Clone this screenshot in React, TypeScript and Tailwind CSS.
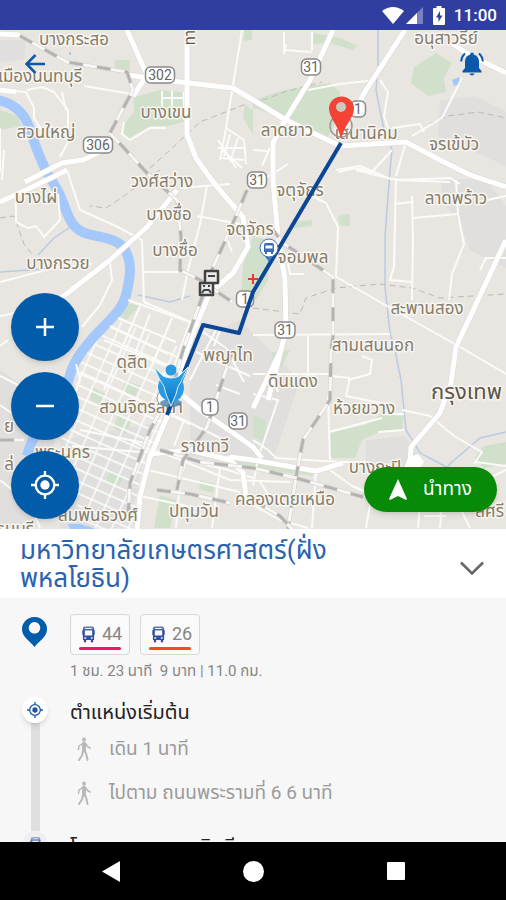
import type { ReactNode } from "react";

type Label = {
  text: string;
  x: number;
  y: number;
  anchor?: "start" | "middle" | "end";
};

const labels: Label[] = [
  { text: "บางกระสอ", x: 74, y: 45 },
  { text: "เมืองนนทบุรี", x: 82, y: 82, anchor: "end" },
  { text: "บางเขน", x: 166, y: 118 },
  { text: "สวนใหญ่", x: 46, y: 138 },
  { text: "วงศ์สว่าง", x: 162, y: 187 },
  { text: "บางไผ่", x: 36, y: 203 },
  { text: "บางซื่อ", x: 169, y: 220 },
  { text: "จตุจักร", x: 250, y: 235 },
  { text: "บางซื่อ", x: 175, y: 256 },
  { text: "บางกรวย", x: 58, y: 269 },
  { text: "ดุสิต", x: 132, y: 368 },
  { text: "สวนจิตรลดา", x: 141, y: 413 },
  { text: "พญาไท", x: 228, y: 361 },
  { text: "ราชเทวี", x: 205, y: 452 },
  { text: "พระนคร", x: 90, y: 458, anchor: "end" },
  { text: "สัมพันธวงศ์", x: 98, y: 521 },
  { text: "ปทุมวัน", x: 194, y: 517 },
  { text: "อนุสาวรีย์", x: 446, y: 44 },
  { text: "ลาดยาว", x: 287, y: 136 },
  { text: "เสนานิคม", x: 366, y: 139 },
  { text: "จรเข้บัว", x: 454, y: 150 },
  { text: "จตุจักร", x: 300, y: 196 },
  { text: "ลาดพร้าว", x: 456, y: 204 },
  { text: "จอมพล", x: 303, y: 263 },
  { text: "สะพานสอง", x: 427, y: 314 },
  { text: "สามเสนนอก", x: 373, y: 351 },
  { text: "ดินแดง", x: 293, y: 387 },
  { text: "ห้วยขวาง", x: 364, y: 414 },
  { text: "บางกะปิ", x: 375, y: 473 },
  { text: "คลองเตยเหนือ", x: 285, y: 505 },
  { text: "ลศรี", x: 504, y: 517, anchor: "end" },
  { text: "ย", x: 14, y: 432, anchor: "end" },
  { text: "ล่", x: 14, y: 470, anchor: "end" },
  { text: "ธนบุรี", x: 34, y: 535, anchor: "end" },
];

const shields = [
  { text: "302", x: 160, y: 75, w: 29 },
  { text: "306", x: 98, y: 145, w: 29 },
  { text: "31", x: 311, y: 67, w: 19 },
  { text: "1", x: 358, y: 109, w: 15 },
  { text: "31", x: 257, y: 180, w: 19 },
  { text: "1", x: 245, y: 299, w: 17 },
  { text: "31", x: 285, y: 330, w: 20 },
  { text: "1", x: 210, y: 407, w: 16 },
  { text: "31", x: 238, y: 421, w: 18 },
];

const parks = [
  "M134 97 160 90 182 92 184 122 168 126 150 126 128 139 121 128 134 112Z",
  "M115 60 130 60 130 70 115 68Z",
  "M253 100 284 90 330 83 340 92 336 122 326 140 288 119 253 108Z",
  "M414 67 436 53 452 63 444 78 446 92 428 96 411 83Z",
  "M253 236 268 240 268 280 256 300 241 290 243 265Z",
  "M0 110 17 116 22 126 0 130Z",
  "M338 216 350 214 350 226 340 226Z",
  "M292 222 312 220 312 226 294 228Z",
  "M329 433 365 425 382 414 404 416 402 430 378 433 362 440 355 458 331 458Z",
  "M475 458 484 446 506 442 506 464 484 468Z",
  "M121 302 140 306 126 320 118 314Z",
  "M253 415 266 420 264 442 253 436Z",
  "M160 495 176 500 170 528 154 528Z",
  "M230 459 316 470 312 476 230 465Z",
  "M272 352 290 350 282 366 274 370Z",
  "M126 380 140 386 134 398 121 392Z",
  "M93 388 106 394 101 405 90 400Z",
  "M118 415 132 420 126 434 113 428Z",
  "M110 470 124 476 118 488 106 482Z",
  "M245 30 252 30 252 40 243 41Z",
  "M245 105 253 110 253 134 243 118Z",
  "M314 33 340 38 358 46 352 50 330 43 312 44Z",
  "M200 480 215 484 213 493 199 489Z",
];

const urban = [
  "M440 100 476 96 506 112 506 166 470 150 438 136Z",
  "M440 180 486 178 506 206 506 268 470 250 458 220 444 204Z",
  "M0 370 30 390 60 420 50 460 30 528 0 528Z",
  "M60 440 150 424 130 528 60 528Z",
  "M366 440 404 436 420 456 400 474 366 464Z",
  "M190 340 240 320 300 380 270 470 190 456Z",
  "M0 40 26 40 24 60 0 62Z",
];

const minorRoads = [
  "M0 90 26 92 34 108 34 118 44 134",
  "M27 90 42 87 54 92 68 110 68 142 60 157",
  "M84 86 132 94 M0 128 0 172 M4 150 2 180 M66 110 62 92",
  "M162 91 162 106 M172 91 172 106 M162 98 184 98 M184 92 184 120",
  "M124 122 122 134 130 140 150 128 166 128",
  "M242 30 226 128 220 160 M226 128 244 140 246 164 M222 150 242 168",
  "M218 140 236 168 M230 134 224 156 M238 138 230 162 M218 148 246 148 M220 158 244 160",
  "M67 170 80 210 116 226 142 240 144 302 M142 272 178 272",
  "M16 202 16 222 28 228 36 226 44 237 60 220 58 194",
  "M0 282 54 268 92 264 M110 262 112 280 100 305 82 327",
  "M180 188 230 184 M207 186 200 224 188 270 182 300",
  "M197 216 240 224 M226 236 232 252 M144 302 200 326",
  "M128 300 190 322 M140 306 104 390 M118 318 176 342 M110 326 168 354 M150 314 128 372",
  "M172 318 152 366 M190 322 172 372 M104 340 166 366",
  "M284 32 284 50 312 52 M312 32 312 50 M286 44 284 54",
  "M308 90 340 84 376 80 M380 80 388 92 384 116 392 140 M406 142 396 176",
  "M462 78 442 118 412 136 M392 128 420 124 424 132",
  "M253 150 268 151 M262 166 270 148 M336 170 360 166 388 178",
  "M288 164 253 186 M394 180 450 178 460 184 M356 170 396 180 450 182",
  "M396 178 394 266 390 280 412 282 M412 196 413 240 412 300 M394 204 412 202",
  "M412 218 458 214 M456 180 458 214 464 244 452 274 449 300 M480 270 486 258 506 258",
  "M300 190 326 203 338 227 336 277 M288 263 290 274 304 274",
  "M333 275 380 302 460 347 M460 347 506 374 M478 202 506 196",
  "M253 335 390 334 M308 334 308 376 M253 374 330 374 M272 376 278 392 M331 376 350 378 M348 380 370 374 372 360 362 356",
  "M350 378 346 396 386 404 384 414 404 414 M402 410 430 416 454 436 482 452 474 464",
  "M328 396 330 460 M329 432 382 418 M378 432 404 430 M253 394 278 400 258 458",
  "M253 440 268 450 276 458 340 462 366 462 M258 458 253 486 M330 470 352 486 372 494 366 528",
  "M184 420 220 438 M160 410 184 420 174 446 M130 440 154 452 228 470 253 478",
  "M156 450 230 480 290 482 M148 470 240 492 M192 440 180 480 176 528 M220 468 212 528",
  "M140 496 196 508 M260 482 272 500 M253 505 280 520 308 528 M316 470 312 528",
  "M404 500 428 512 M420 504 418 528 M442 500 440 528 M424 516 446 516 M460 508 470 528",
  "M200 330 226 348 244 382 M220 330 214 346 M196 352 250 376 M216 385 240 394 M190 380 216 330",
  "M0 376 24 388 40 410 M0 405 30 426 M0 480 30 504 40 528 M8 340 0 346 M0 316 20 312",
  "M76 364 80 380 66 420 M80 372 190 424 M80 430 150 444 M72 446 140 452",
  "M392 150 372 172 356 168 338 172 M444 500 506 470 M476 462 506 466",
];

const majorRoads = [
  "M127 75 180 82 233 88 253 100 286 120 340 146 406 142 440 160 470 175 506 187",
  "M187 30 187 135 196 158 213 182 243 217 248 247 233 273 210 293 197 323 187 350 167 417 150 457 140 497 137 529",
  "M333 30 310 80 284 122 273 143 273 180 278 237 285 280 286 330 281 350 253 408",
  "M405 30 366 90 345 128",
  "M450 42 466 53 506 73",
  "M506 240 456 347 451 383 440 413 411 447 410 463",
  "M0 202 26 190 53 177 67 170 M25 182 62 163 83 160 110 147",
  "M0 90 16 92",
  "M127 30 147 75 133 96",
  "M56 302 110 260 147 227 177 190",
  "M180 393 200 410 233 433 253 447 262 458",
  "M150 454 190 450 230 460",
  "M230 457 253 460 316 471 343 463",
  "M227 457 243 473 247 503",
  "M0 34 20 35",
  "M281 350 268 400",
];

const rails = [
  "M20 36 67 62 127 72 133 90 110 133 147 173 177 200 181 237 180 270 200 280 232 302",
  "M247 190 227 237 213 267 200 303 183 350 172 390 150 430 130 483 128 518",
  "M270 226 283 243 333 277 333 337 331 350 330 400 303 440 296 477 288 529",
  "M160 450 200 462 253 468 296 478 363 497",
  "M157 490 190 494 230 503",
  "M232 352 218 394 207 427 183 460 177 490",
  "M253 500 280 516 292 529",
  "M0 440 24 440",
];

const streams = [
  "M378 30 378 66 376 90 384 130 392 150 390 170 385 237 385 287 390 333 395 350 401 380 406 430 420 453 452 470",
  "M38 255 54 238 72 226",
  "M0 272 30 270 90 266",
  "M138 295 170 302 190 296",
  "M424 492 452 462 480 438 506 432",
];

const boundaries = [
  "M150 168 170 150 200 122 246 104",
  "M253 104 284 92 322 82",
  "M160 170 140 184 124 196 106 208 90 206",
  "M0 218 14 216 24 244 32 254",
  "M253 308 300 314 306 298 336 288 380 284 412 288 440 298 506 294",
  "M430 124 448 116 478 112 506 118",
];

function Fab({ label, children }: { label: string; children: ReactNode }) {
  return (
    <button
      type="button"
      aria-label={label}
      className="flex size-[68px] items-center justify-center rounded-full bg-[#035caa] text-white shadow-md"
    >
      {children}
    </button>
  );
}

function LocateIcon({ className }: { className: string }) {
  return (
    <svg viewBox="0 0 24 24" className={className} fill="none" stroke="currentColor">
      <circle cx="12" cy="12" r="8" strokeWidth="2" />
      <circle cx="12" cy="12" r="4" fill="currentColor" stroke="none" />
      <path d="M12 0v4M12 20v4M0 12h4M20 12h4" strokeWidth="2" />
    </svg>
  );
}

function BusIcon({ className }: { className: string }) {
  return (
    <svg viewBox="0 0 14 17" className={className} fill="currentColor">
      <path d="M3 0h8q2 0 2 2v2H1V2q0-2 2-2Z" opacity=".75" />
      <path d="M3.500 1.500h7v1h-7Z" fill="#fff" />
      <path
        fillRule="evenodd"
        d="M1 3h12v11.500h-1V16q0 1-1.200 1T9.500 16v-1.500h-5V16q0 1-1.300 1T2 16v-1.500H1ZM3 4v5.500h8V4ZM2.500 11.500v1.500h2v-1.500Zm7 0v1.500h2v-1.500Z"
      />
      <path d="M0 4h1v5H0ZM13 4h1v5h-1Z" opacity=".7" />
    </svg>
  );
}

function WalkIcon() {
  return (
    <svg
      viewBox="0 0 14 24"
      className="h-6 w-[14px] shrink-0 text-[#b9b9b9]"
      fill="none"
      stroke="currentColor"
      strokeLinecap="round"
      strokeLinejoin="round"
    >
      <circle cx="7" cy="2.500" r="2" fill="currentColor" stroke="none" />
      <path d="M7 6.500V13.500" strokeWidth="4" />
      <path d="M5.500 6.500 2 9 1.500 12.500M8.500 6.500 10.500 9.500 13 11" strokeWidth="1.500" />
      <path d="M6 14 5 18.500 2 23M8 14 9.500 18 10.500 23" strokeWidth="2" />
    </svg>
  );
}

function StatusBar() {
  return (
    <header className="flex h-[30px] shrink-0 items-center justify-end bg-[#303f9f] pr-[9px] text-white">
      <svg viewBox="0 0 22 17" className="h-[17px] w-[22px]" fill="currentColor">
        <path d="M11 17 0 4Q11-4 22 4Z" />
      </svg>
      <svg viewBox="0 0 17 17" className="ml-[2px] h-[17px] w-[17px]" fill="currentColor">
        <path d="M0 17 17 0V17Z" opacity=".35" />
        <path d="M0 17 11 6V17Z" />
      </svg>
      <svg viewBox="0 0 12 19" className="ml-[10px] h-[19px] w-3">
        <path d="M3.500 0h5v2H11q1 0 1 1v15q0 1-1 1H1q-1 0-1-1V3Q0 2 1 2h2.500Z" fill="currentColor" />
        <path d="M7 5 3 11.500h2.500V16L9.500 9.500H7Z" fill="#303f9f" />
      </svg>
      <time className="ml-[9px] text-[17px] leading-none font-medium">11:00</time>
    </header>
  );
}

function MapCanvas() {
  return (
    <svg
      viewBox="0 30 506 499"
      preserveAspectRatio="xMidYMid slice"
      className="absolute inset-0 h-full w-full"
      role="img"
      aria-label="แผนที่"
    >
      <defs>
        <pattern id="blocks" width="15" height="11" patternUnits="userSpaceOnUse" patternTransform="rotate(24)">
          <path d="M0 1H15M2 0V11" stroke="#fff" strokeWidth="1.300" fill="none" />
        </pattern>
        <linearGradient id="person" x1="0" x2="0" y1="0" y2="1">
          <stop offset="0" stopColor="#35aef0" />
          <stop offset="1" stopColor="#0b73c4" />
        </linearGradient>
      </defs>
      <rect y="30" width="506" height="499" fill="#e9e6e1" />
      <g fill="#e0dfde">
        {urban.map((d) => (
          <path key={d} d={d} />
        ))}
      </g>
      <g fill="#d0e0cb">
        {parks.map((d) => (
          <path key={d} d={d} />
        ))}
      </g>
      <path d="M82 345 118 320 190 352 170 420 150 456 136 529 84 529 60 440 74 400Z" fill="url(#blocks)" />
      <g fill="none" stroke="#b9cbe4" strokeWidth="1.500">
        {streams.map((d) => (
          <path key={d} d={d} />
        ))}
      </g>
      <path
        d="M-4 100C12 102 24 112 29 127S40 160 48 174 58 188 64 205 74 230 88 234 118 238 125 250 131 275 126 295 102 324 83 350 74 378 60 398 34 430 27 456"
        fill="none"
        stroke="#a5c8fa"
        strokeWidth="10"
      />
      <path d="M68 524 80 524 96 529 70 529Z" fill="#a5c8fa" />
      <path d="M452 80 459 77 461 84 454 86ZM69 52 71 52 71 55 69 55Z" fill="#a5c8fa" />
      <g fill="none" stroke="#bdbab5" strokeWidth="1" strokeDasharray="6 4">
        {boundaries.map((d) => (
          <path key={d} d={d} />
        ))}
      </g>
      <g fill="none" stroke="#fbfbfa" strokeWidth="2" strokeLinejoin="round">
        {minorRoads.map((d) => (
          <path key={d} d={d} />
        ))}
      </g>
      <g fill="none" strokeLinejoin="round">
        {majorRoads.map((d) => (
          <path key={d} d={d} stroke="#dcdad6" strokeWidth="6" />
        ))}
        {majorRoads.map((d) => (
          <path key={d} d={d} stroke="#fff" strokeWidth="5" />
        ))}
      </g>
      <path d="M408 458 418 454 424 462 420 468 404 468Z" fill="#fff" />
      <g fill="none">
        {rails.map((d) => (
          <g key={d}>
            <path d={d} stroke="#d0cecb" strokeWidth="4" />
            <path d={d} stroke="#f8f7f5" strokeWidth="3" />
            <path d={d} stroke="#b5b3b1" strokeWidth="3" strokeDasharray="14 14" />
          </g>
        ))}
      </g>

      <g
        fontSize="17"
        fill="#857c69"
        stroke="#f8f6f2"
        strokeWidth="3"
        strokeLinejoin="round"
        paintOrder="stroke"
      >
        {labels.map((l) => (
          <text key={`${l.text}${l.x}`} x={l.x} y={l.y} textAnchor={l.anchor ?? "middle"}>
            {l.text}
          </text>
        ))}
        <text x="431" y="399" fontSize="22" fill="#5c554a">
          กรุงเทพ
        </text>
        <text fontSize="15" fill="#5c554a" textAnchor="end" transform="translate(195 30) rotate(-90)">
          ทา
        </text>
      </g>

      <g fontSize="14" textAnchor="middle" fill="#666">
        {shields.map((s) => (
          <g key={`${s.text}${s.x}`}>
            <rect
              x={s.x - s.w / 2}
              y={s.y - 8}
              width={s.w}
              height="16"
              rx="5"
              fill="#fff"
              stroke="#8b8b8b"
              strokeWidth="1.500"
            />
            <text x={s.x} y={s.y + 5}>
              {s.text}
            </text>
          </g>
        ))}
      </g>

      <g fill="#e9e9e9" stroke="#424242" strokeWidth="2.500" strokeLinejoin="round">
        <path d="M205 271h13v12h-13ZM200 283h13v12h-13Z" />
        <path d="M208 276h7M202 293l2-3h5l2 3M203 286h2M208 286h2" fill="none" strokeWidth="2" />
      </g>
      <path d="M253 274v10M248 279h10" stroke="#ee3434" strokeWidth="2" />

      <circle cx="165" cy="398" r="8" fill="#fff" stroke="#999" strokeWidth="1" />
      <path
        d="M341 143 253 292 239 333 203 325 167 415"
        fill="none"
        stroke="#0c4796"
        strokeWidth="4"
        strokeLinejoin="round"
      />

      <path d="M269 262 264 255h10Z" fill="#4377b8" />
      <circle cx="269" cy="248" r="9" fill="#fff" stroke="#4377b8" strokeWidth="1" />
      <g fill="#3a6cba">
        <path fillRule="evenodd" d="M266 243h6q2 0 2 2v7h-10v-7q0-2 2-2Zm-.5 2.500v3h7v-3Z" />
        <path d="M265 252h2v2h-2ZM271 252h2v2h-2Z" />
      </g>

      <circle cx="341" cy="126" r="11" fill="none" stroke="#9b9b9b" strokeWidth="1.500" />
      <path d="M341 139C338 124 329 118 329 108.500a12.500 12 0 0 1 25 0C354 118 345 124 341 139Z" fill="#f44336" />
      <circle cx="341" cy="107" r="5" fill="#c9c9c0" />

      <ellipse cx="171" cy="403" rx="11" ry="4" fill="#4a7fae" opacity=".8" />
      <path d="M158 388Q158 381 162 378H180Q184 382 184 389 183 399 172 403 159 399 158 388Z" fill="#2b9ae3" />
      <path
        d="M154 367 163 376Q171 380 179 376L188 367 182 380Q177 386 176 394L171 406 166 394Q165 386 160 380Z"
        fill="url(#person)"
        stroke="#d5eefc"
        strokeWidth="1"
        strokeLinejoin="round"
      />
      <circle cx="171" cy="370" r="5.500" fill="#2a9be2" />
    </svg>
  );
}

function MapView() {
  return (
    <section className="relative min-h-0 flex-1 overflow-hidden">
      <MapCanvas />
      <button type="button" aria-label="กลับ" className="absolute top-6 left-[25px] text-[#0b59a8]">
        <svg viewBox="0 0 20 20" className="size-5" fill="none" stroke="currentColor" strokeWidth="2.500">
          <path d="M20 10H2M10.500 1 1.500 10l9 9" />
        </svg>
      </button>
      <button
        type="button"
        aria-label="แจ้งเตือน"
        className="absolute top-[22px] right-[22px] text-[#0b59a8]"
      >
        <svg viewBox="0 0 24 24" className="size-6" fill="currentColor">
          <path d="M12 .5q1.800 0 1.800 2c3.200.8 5.200 3.500 5.200 7V16l2.500 3v1.500h-19V19L5 16V9.500c0-3.500 2-6.200 5.200-7q0-2 1.800-2ZM9.500 21.500h5q-.5 2-2.500 2t-2.500-2Z" />
          <path
            d="M5 1.500Q1.500 4.500 1.200 9.500M19 1.500q3.500 3 3.800 8"
            fill="none"
            stroke="currentColor"
            strokeWidth="2"
          />
        </svg>
      </button>
      <div className="absolute bottom-[10px] left-[11px] flex flex-col gap-[11px]">
        <Fab label="ขยาย">
          <svg viewBox="0 0 18 18" className="size-[18px]" stroke="currentColor" strokeWidth="2.500">
            <path d="M9 0v18M0 9h18" />
          </svg>
        </Fab>
        <Fab label="ย่อ">
          <svg viewBox="0 0 18 18" className="size-[18px]" stroke="currentColor" strokeWidth="2.500">
            <path d="M0 9h18" />
          </svg>
        </Fab>
        <Fab label="ตำแหน่งของฉัน">
          <LocateIcon className="size-7" />
        </Fab>
      </div>
      <button
        type="button"
        className="absolute right-[9px] bottom-[17px] flex h-[45px] w-[133px] items-center justify-center gap-4 rounded-full bg-[#078a07] text-[19px] text-white shadow-md"
      >
        <svg viewBox="0 0 18 21" className="h-[21px] w-[18px]" fill="currentColor">
          <path d="M9 0 18 20l-1 1-8-4-8 4-1-1Z" />
        </svg>
        นำทาง
      </button>
    </section>
  );
}

function BusChip({ line, barClass }: { line: string; barClass: string }) {
  return (
    <div className="w-[60px] rounded-[4px] border border-[#d8d8d8] bg-[#fafafa] px-2 pt-[8px] pb-1">
      <div className="flex items-center gap-[7px] pl-[3px]">
        <BusIcon className="h-[17px] w-[13px] shrink-0 text-[#2c4ea3]" />
        <span className="text-lg leading-[22px] text-[#858585]">{line}</span>
      </div>
      <div className={`mt-[2px] h-[3px] rounded-full ${barClass}`} />
    </div>
  );
}

function WalkStep({ children }: { children: ReactNode }) {
  return (
    <li className="flex h-11 items-center gap-[18px] pl-[7px]">
      <WalkIcon />
      <span>{children}</span>
    </li>
  );
}

function RoutePanel() {
  return (
    <section className="flex h-[313px] shrink-0 flex-col overflow-hidden bg-[#f7f7f7]">
      <div className="flex h-[69px] shrink-0 items-center justify-between bg-white pr-[22px] pl-5">
        <h1 className="max-w-[340px] text-[26px] leading-7 text-[#2a62b0]">
          มหาวิทยาลัยเกษตรศาสตร์(ฝั่ง
          <br />
          พหลโยธิน)
        </h1>
        <button type="button" aria-label="ย่อรายละเอียด" className="pt-2 text-[#666]">
          <svg viewBox="0 0 24 14" className="h-[14px] w-6" fill="none" stroke="currentColor" strokeWidth="2.500">
            <path d="M1 1.500 12 12.500 23 1.500" />
          </svg>
        </button>
      </div>

      <div className="flex pt-4 pl-[22px]">
        <div className="w-12 shrink-0 pt-[3px] text-[#035caa]">
          <svg viewBox="0 0 25 30" className="h-[30px] w-[25px]" fill="currentColor">
            <path
              fillRule="evenodd"
              d="M12.500 0A12.300 12.300 0 0 0 0 12.300C0 20 8 24 12.500 30 17 24 25 20 25 12.300A12.300 12.300 0 0 0 12.500 0Zm0 5a5.800 5.800 0 1 1 0 11.600 5.800 5.800 0 0 1 0-11.600Z"
            />
          </svg>
        </div>
        <div>
          <div className="flex gap-[10px]">
            <BusChip line="44" barClass="bg-[#f01866]" />
            <BusChip line="26" barClass="bg-[#fa4a1c]" />
          </div>
          <p className="mt-1 text-[15px] leading-6 whitespace-pre text-[#858585]">
            1 ชม. 23 นาที{"  "}9 บาท | 11.0 กม.
          </p>
        </div>
      </div>

      <ol className="mt-[14px] pl-[22px]">
        <li className="flex gap-[22px]">
          <div className="flex w-[26px] shrink-0 flex-col items-center">
            <span className="z-10 flex size-[26px] items-center justify-center rounded-full bg-white text-[#1f57a8] shadow-md">
              <LocateIcon className="size-4" />
            </span>
            <span className="w-[9px] flex-1 bg-[#dfdfdf]" />
          </div>
          <div className="pb-4">
            <h2 className="text-[20px] leading-[30px] text-[#222]">ตำแหน่งเริ่มต้น</h2>
            <ul className="text-[19px] text-[#9b9b9b]">
              <WalkStep>เดิน 1 นาที</WalkStep>
              <WalkStep>ไปตาม ถนนพระรามที่ 6 6 นาที</WalkStep>
            </ul>
          </div>
        </li>
        <li className="flex gap-[22px]">
          <span className="flex size-[26px] shrink-0 items-center justify-center rounded-full bg-[#efefef] text-[#5a7bb8]">
            <BusIcon className="h-[14px] w-[11px]" />
          </span>
          <h2 className="text-[20px] leading-[30px] text-[#222]">โรงพยาบาลรามาธิบดี</h2>
        </li>
      </ol>
    </section>
  );
}

function NavBar() {
  return (
    <nav className="flex h-[58px] shrink-0 items-center justify-center gap-[122px] bg-black text-white">
      <button type="button" aria-label="ย้อนกลับ">
        <svg viewBox="0 0 20 21" className="h-[21px] w-5" fill="currentColor">
          <path d="M1 10.500 19 0V21Z" />
        </svg>
      </button>
      <button type="button" aria-label="หน้าหลัก">
        <svg viewBox="0 0 21 21" className="size-[21px]" fill="currentColor">
          <circle cx="10.500" cy="10.500" r="10.500" />
        </svg>
      </button>
      <button type="button" aria-label="ล่าสุด">
        <svg viewBox="0 0 20 20" className="size-5" fill="currentColor">
          <rect x="1" y="1" width="18" height="18" rx="1" />
        </svg>
      </button>
    </nav>
  );
}

export default function App() {
  return (
    <main className="flex h-screen flex-col overflow-hidden bg-black font-['Roboto','Noto_Sans_Thai',sans-serif]">
      <StatusBar />
      <MapView />
      <RoutePanel />
      <NavBar />
    </main>
  );
}
